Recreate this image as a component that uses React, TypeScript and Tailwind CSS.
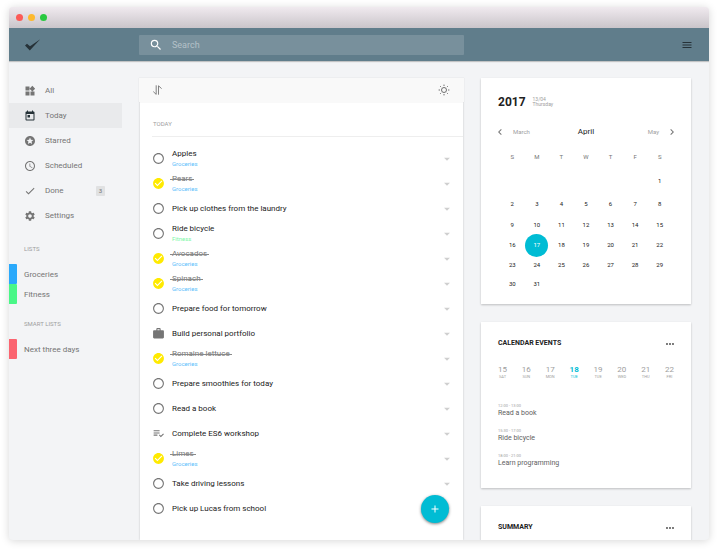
import { useState } from "react";
import clsx from "clsx";
import type { IconType } from "react-icons";
import {
  MdAccessTime,
  MdAdd,
  MdArrowDropDown,
  MdCheck,
  MdCheckCircle,
  MdKeyboardArrowLeft,
  MdKeyboardArrowRight,
  MdMenu,
  MdMoreHoriz,
  MdPlaylistAddCheck,
  MdRadioButtonUnchecked,
  MdSearch,
  MdSettings,
  MdStars,
  MdToday,
  MdWidgets,
  MdWork,
} from "react-icons/md";

type ListName = "Groceries" | "Fitness";

interface Task {
  title: string;
  list?: ListName;
  done?: boolean;
  icon?: IconType;
}

const initialTasks: Task[] = [
  { title: "Apples", list: "Groceries" },
  { title: "Pears", list: "Groceries", done: true },
  { title: "Pick up clothes from the laundry" },
  { title: "Ride bicycle", list: "Fitness" },
  { title: "Avocados", list: "Groceries", done: true },
  { title: "Spinach", list: "Groceries", done: true },
  { title: "Prepare food for tomorrow" },
  { title: "Build personal portfolio", icon: MdWork },
  { title: "Romaine lettuce", list: "Groceries", done: true },
  { title: "Prepare smoothies for today" },
  { title: "Read a book" },
  { title: "Complete ES6 workshop", icon: MdPlaylistAddCheck },
  { title: "Limes", list: "Groceries", done: true },
  { title: "Take driving lessons" },
  { title: "Pick up Lucas from school" },
];

const navItems: { label: string; icon: IconType; active?: boolean; count?: number }[] = [
  { label: "All", icon: MdWidgets },
  { label: "Today", icon: MdToday, active: true },
  { label: "Starred", icon: MdStars },
  { label: "Scheduled", icon: MdAccessTime },
  { label: "Done", icon: MdCheck, count: 3 },
  { label: "Settings", icon: MdSettings },
];

const weeks: { height: string; days: (number | null)[] }[] = [
  { height: "h-6", days: [null, null, null, null, null, null, 1] },
  { height: "h-[22px]", days: [2, 3, 4, 5, 6, 7, 8] },
  { height: "h-5", days: [9, 10, 11, 12, 13, 14, 15] },
  { height: "h-5", days: [16, 17, 18, 19, 20, 21, 22] },
  { height: "h-5", days: [23, 24, 25, 26, 27, 28, 29] },
  { height: "h-[18px]", days: [30, 31, null, null, null, null, null] },
];

const strip = [
  [15, "SAT"],
  [16, "SUN"],
  [17, "MON"],
  [18, "TUE"],
  [19, "TUE"],
  [20, "WED"],
  [21, "THU"],
  [22, "FRI"],
] as const;

const events = [
  ["12:00 - 13:00", "Read a book"],
  ["15:30 - 17:00", "Ride bicycle"],
  ["18:00 - 21:00", "Learn programming"],
];

const cardClass = "bg-white shadow-[0_1px_2px_rgba(0,0,0,0.22)]";

function TitleBar() {
  return (
    <div className="flex h-[21px] shrink-0 items-center gap-[5px] bg-linear-to-b from-[#f0eaef] to-[#cac5ca] pl-[7px]">
      <span className="size-[7px] rounded-full bg-[#fc5b57]" />
      <span className="size-[7px] rounded-full bg-[#fdb92d]" />
      <span className="size-[7px] rounded-full bg-[#29c940]" />
    </div>
  );
}

function Header() {
  return (
    <header className="relative flex h-[33px] shrink-0 items-center bg-[#607d8b] shadow-[0_1px_1px_rgba(0,0,0,0.2)]">
      <div className="w-[130px] shrink-0 pl-4">
        <svg viewBox="0 0 16 12" className="h-3 w-4" role="img" aria-label="Logo">
          <path d="M0 6.4 2 4.7 5 7.2 15.2.2 4.8 11.6Z" fill="#263238" />
        </svg>
      </div>
      <label className="flex h-5 flex-1 items-center gap-[9px] rounded-[1px] bg-[#78909c] pl-2.5">
        <MdSearch className="size-[14px] text-white" />
        <input
          type="text"
          placeholder="Search"
          aria-label="Search"
          className="min-w-0 flex-1 bg-transparent text-[9px] leading-3 text-white outline-none placeholder:text-[#b4c1c8]"
        />
      </label>
      <div className="flex w-[245px] shrink-0 justify-end pr-4">
        <button type="button" aria-label="Menu">
          <MdMenu className="size-3 text-[#263238]" />
        </button>
      </div>
    </header>
  );
}

function ListLink({ name, color }: { name: string; color: string }) {
  return (
    <a href="#" className="flex h-5 items-center gap-[7px]">
      <span className={clsx("h-full w-2 rounded-r-[1px]", color)} />
      {name}
    </a>
  );
}

function Sidebar() {
  return (
    <nav className="w-[130px] shrink-0 pt-[17px] text-[8px] leading-[11px] text-[#757575]">
      <ul>
        {navItems.map(({ label, icon: Icon, active, count }) => (
          <li key={label}>
            <a
              href="#"
              className={clsx("mr-[17px] flex h-[25px] items-center pr-[17px] pl-[15px]", active && "bg-[#e9eaec]")}
            >
              <Icon className={clsx("size-3", active && "text-[#263238]")} />
              <span className="ml-[9px]">{label}</span>
              {count && (
                <span className="ml-auto rounded-[1px] bg-[#e0e1e2] px-[3px] text-[6px] leading-[10px]">
                  {count}
                </span>
              )}
            </a>
          </li>
        ))}
      </ul>
      <h2 className="mt-4 pl-[15px] text-[6px] leading-[10px] text-[#9e9e9e]">LISTS</h2>
      <div className="mt-[10px]">
        <ListLink name="Groceries" color="bg-[#2aa9fb]" />
        <ListLink name="Fitness" color="bg-[#49f787]" />
      </div>
      <h2 className="mt-[15px] pl-[15px] text-[6px] leading-[10px] text-[#9e9e9e]">SMART LISTS</h2>
      <div className="mt-[10px]">
        <ListLink name="Next three days" color="bg-[#fb6470]" />
      </div>
    </nav>
  );
}

function TaskRow({ task, onToggle }: { task: Task; onToggle: () => void }) {
  const Icon = task.done ? MdCheckCircle : (task.icon ?? MdRadioButtonUnchecked);
  return (
    <li className="flex h-[25px] items-center justify-between pr-[9px]">
      <label className="relative flex items-center gap-[7px]">
        <input type="checkbox" checked={!!task.done} onChange={onToggle} className="sr-only" />
        <Icon className={clsx("size-[13px]", task.done ? "text-[#ffea00]" : "text-[#757575]")} />
        <span className="flex flex-col items-start">
          <span
            className={clsx(
              "text-[8px] leading-[10px]",
              task.done
                ? "relative text-[#757575] before:absolute before:inset-x-[-2px] before:top-[5px] before:h-px before:bg-[#8a8a8a]"
                : "text-[#212121]",
            )}
          >
            {task.title}
          </span>
          {task.list && (
            <span
              className={clsx(
                "text-[6px] leading-[10px]",
                task.list === "Groceries" ? "text-[#5cc0fb]" : "text-[#7df7a8]",
              )}
            >
              {task.list}
            </span>
          )}
        </span>
      </label>
      <button type="button" aria-label={`Options for ${task.title}`}>
        <MdArrowDropDown className="size-[14px] text-[#cfcfcf]" />
      </button>
    </li>
  );
}

function TaskPanel() {
  const [tasks, setTasks] = useState(initialTasks);
  const toggle = (index: number) =>
    setTasks(tasks.map((task, i) => (i === index ? { ...task, done: !task.done } : task)));

  return (
    <main className="relative mt-[17px] flex flex-1 flex-col">
      <div className="relative flex h-6 shrink-0 items-center justify-between bg-[#f9f9f9] px-[14px] shadow-[0_0_1px_rgba(0,0,0,0.15)]">
        <button type="button" aria-label="Sort">
          <svg viewBox="0 0 10 10" className="size-[10px]" fill="none" stroke="#757575" strokeWidth="0.9">
            <path d="M3.2.3V9.4L.3 6.6" />
            <path d="M5.5 9.7V.8L8.6 3.6" />
          </svg>
        </button>
        <button type="button" aria-label="Brightness">
          <svg viewBox="0 0 12 12" className="size-3" fill="none" stroke="#616161" strokeWidth="0.9">
            <circle cx="6" cy="6" r="2.5" />
            <path d="M6 .6V2M6 10V11.4M.6 6H2M10 6H11.4M2.2 2.2 3.1 3.1M8.9 8.9 9.8 9.8M9.8 2.2 8.9 3.1M3.1 8.9 2.2 9.8" />
          </svg>
        </button>
      </div>
      <section className="mx-px flex-1 bg-white pl-3 shadow-[0_0_2px_rgba(0,0,0,0.2)]">
        <h1 className="border-b border-[#eeeeee] pt-[17px] pb-[7px] pl-px text-[6px] leading-[10px] text-[#9e9e9e]">
          TODAY
        </h1>
        <ul className="pt-[9px]">
          {tasks.map((task, index) => (
            <TaskRow key={task.title} task={task} onToggle={() => toggle(index)} />
          ))}
        </ul>
      </section>
      <button
        type="button"
        aria-label="Add task"
        className="absolute right-[15px] bottom-[17px] flex size-7 items-center justify-center rounded-full bg-[#00bcd4] text-white shadow-[0_1px_3px_rgba(0,0,0,0.5)]"
      >
        <MdAdd className="size-3" />
      </button>
    </main>
  );
}

function CalendarCard() {
  return (
    <section className={clsx(cardClass, "px-[17px] pt-[17px] pb-[11px]")}>
      <div className="flex items-center gap-[7px]">
        <h2 className="text-[12px] leading-[14px] font-bold text-[#212121]">2017</h2>
        <p className="text-[5px] leading-[5px] text-[#9e9e9e]">
          13/04
          <br />
          Thursday
        </p>
      </div>
      <div className="mt-[17px] grid grid-cols-3 items-center text-[6px] leading-3 text-[#9e9e9e]">
        <button type="button" className="-ml-1 flex items-center gap-[7px]">
          <MdKeyboardArrowLeft className="size-3 text-[#757575]" />
          March
        </button>
        <h3 className="text-center text-[8px] text-[#212121]">April</h3>
        <button type="button" className="-mr-1 flex items-center justify-end gap-[7px]">
          May
          <MdKeyboardArrowRight className="size-3 text-[#757575]" />
        </button>
      </div>
      <div className="mt-[7px] px-[2px]">
        <table className="w-full table-fixed text-center text-[6px] leading-[8px] text-[#212121]">
          <thead>
            <tr className="h-6 text-[#757575]">
              {["S", "M", "T", "W", "T", "F", "S"].map((day, i) => (
                <th key={i} className="p-0 font-normal">
                  {day}
                </th>
              ))}
            </tr>
          </thead>
          <tbody>
            {weeks.map(({ height, days }, row) => (
              <tr key={row} className={height}>
                {days.map((day, i) => (
                  <td key={i} className="p-0">
                    {day === 17 ? (
                      <span className="mx-auto -my-1 flex size-[23px] items-center justify-center rounded-full bg-[#00bcd4] text-white">
                        17
                      </span>
                    ) : (
                      day
                    )}
                  </td>
                ))}
              </tr>
            ))}
          </tbody>
        </table>
      </div>
    </section>
  );
}

function CardHeading({ title }: { title: string }) {
  return (
    <div className="flex h-[11px] items-start justify-between">
      <h2 className="text-[7px] leading-[11px] font-bold text-[#212121]">{title}</h2>
      <button type="button" aria-label={`${title} options`} className="-mr-[2px]">
        <MdMoreHoriz className="size-3 text-[#616161]" />
      </button>
    </div>
  );
}

function EventsCard() {
  return (
    <section className={clsx(cardClass, "px-[17px] pt-4 pb-5")}>
      <CardHeading title="CALENDAR EVENTS" />
      <ol className="mt-4 flex justify-between text-center text-[#9e9e9e]">
        {strip.map(([day, name]) => (
          <li key={day} className={clsx(day === 18 && "font-bold text-[#00bcd4]")}>
            <span className="block text-[8px] leading-[10px]">{day}</span>
            <span className="block text-[4px] leading-[4px] font-normal">{name}</span>
          </li>
        ))}
      </ol>
      <ul className="mt-6 flex flex-col gap-[10px]">
        {events.map(([time, title]) => (
          <li key={title}>
            <p className="text-[4px] leading-[5px] text-[#9e9e9e]">{time}</p>
            <p className="text-[7px] leading-[10px] text-[#616161]">{title}</p>
          </li>
        ))}
      </ul>
    </section>
  );
}

export default function App() {
  return (
    <div className="h-screen bg-white px-[9px] pt-[7px] pb-[11px] font-[Roboto,sans-serif]">
      <div className="flex h-full flex-col overflow-hidden rounded-[4px] bg-[#f3f4f6] shadow-[0_1px_8px_rgba(0,0,0,0.16)]">
        <TitleBar />
        <Header />
        <div className="flex min-h-0 flex-1">
          <Sidebar />
          <TaskPanel />
          <aside className="mr-[18px] ml-[17px] flex w-[210px] shrink-0 flex-col gap-[18px] pt-[17px]">
            <CalendarCard />
            <EventsCard />
            <section className={clsx(cardClass, "flex-1 px-[17px] pt-4")}>
              <CardHeading title="SUMMARY" />
            </section>
          </aside>
        </div>
      </div>
    </div>
  );
}
